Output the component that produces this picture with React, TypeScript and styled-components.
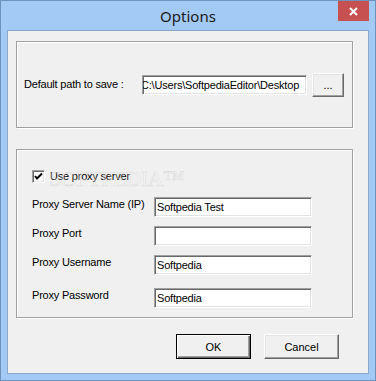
import React from "react";
import styled, { createGlobalStyle } from "styled-components";

const Global = createGlobalStyle`
  html, body { margin: 0; padding: 0; background: #fff; }
  body { font-family: "Liberation Sans", Arial, sans-serif; }
`;

const Window = styled.div`
  box-sizing: border-box;
  width: 376px;
  height: 381px;
  background: #a3caf4;
  border: 1px solid #6f92bb;
  padding: 0 6px 6px 6px;
  display: flex;
  flex-direction: column;
`;

const TitleBar = styled.div`
  height: 29px;
  display: grid;
  grid-template-columns: 1fr auto 1fr;
  align-items: start;
  margin: 0 -6px;
`;

const Title = styled.div`
  grid-column: 2;
  font-family: "Noto Sans", "Open Sans", sans-serif;
  font-size: 15px;
  line-height: 20px;
  padding-top: 5px;
  color: #1a1a1a;
`;

const CloseButton = styled.div`
  grid-column: 3;
  justify-self: end;
  width: 31px;
  height: 20px;
  margin-right: 6px;
  background: #c75050;
  display: flex;
  align-items: center;
  justify-content: center;
`;

const Client = styled.div`
  flex: 1;
  box-sizing: border-box;
  background: #f0f0f0;
  border: 1px solid #8aa8cb;
  padding: 10px 15px 0 8px;
  display: flex;
  flex-direction: column;
  font-size: 11px;
  letter-spacing: -0.2px;
  color: #000;
`;

const GroupBox = styled.div<{ $h: number }>`
  position: relative;
  box-sizing: border-box;
  width: 337px;
  height: ${(p) => p.$h}px;
  border: 1px solid #a0a0a0;
  box-shadow: inset 1px 1px 0 #fff, 1px 1px 0 #fff;
`;

const PathRow = styled.div`
  height: 100%;
  box-sizing: border-box;
  padding: 0 0 0 7px;
  display: grid;
  grid-template-columns: 113px 165px 32px;
  column-gap: 5px;
  align-items: center;
`;

const Label = styled.div`
  font-size: 11px;
  line-height: 13px;
  white-space: nowrap;
`;

const Field = styled.div<{ $w: number }>`
  box-sizing: border-box;
  width: ${(p) => p.$w}px;
  height: 20px;
  background: #fff;
  border: 1px solid;
  border-color: #a0a0a0 #fff #fff #a0a0a0;
  box-shadow: inset 1px 1px 0 #696969, inset -1px -1px 0 #e3e3e3;
  padding: 0 2px;
  display: flex;
  align-items: center;
  overflow: hidden;
  white-space: nowrap;
  font-size: 11px;
`;

const Scrolled = styled.span`
  margin-left: -4px;
`;

const Button = styled.button<{ $default?: boolean }>`
  box-sizing: border-box;
  width: 75px;
  height: 25px;
  padding: 0;
  margin: 0;
  font-family: "Liberation Sans", Arial, sans-serif;
  font-size: 11px;
  color: #000;
  background: #f0f0f0;
  border: 1px solid;
  border-color: ${(p) => (p.$default ? "#000" : "#fff #696969 #696969 #fff")};
  box-shadow: ${(p) =>
    p.$default
      ? "inset 1px 1px 0 #fff, inset -1px -1px 0 #696969, inset -2px -2px 0 #a0a0a0"
      : "inset -1px -1px 0 #a0a0a0, inset 1px 1px 0 #e3e3e3"};
`;

const SmallButton = styled(Button)`
  width: 32px;
  height: 24px;
`;

const ProxyGrid = styled.div`
  box-sizing: border-box;
  padding: 20px 0 0 15px;
  display: grid;
  grid-template-columns: 122px 158px;
  align-items: center;
`;

const CheckRow = styled.div`
  grid-column: 1 / span 2;
  display: flex;
  align-items: center;
  gap: 5px;
  height: 13px;
  margin-bottom: 14px;
`;

const CheckBox = styled.div`
  box-sizing: border-box;
  width: 13px;
  height: 13px;
  background: #fff;
  border: 1px solid;
  border-color: #a0a0a0 #fff #fff #a0a0a0;
  box-shadow: inset 1px 1px 0 #696969, inset -1px -1px 0 #e3e3e3;
  display: flex;
  align-items: center;
  justify-content: center;
`;

const FieldCell = styled.div<{ $gap: number }>`
  margin-bottom: ${(p) => p.$gap}px;
`;

const LabelCell = styled.div<{ $gap: number }>`
  margin-bottom: ${(p) => p.$gap}px;
  padding-bottom: 6px;
  font-size: 11px;
  line-height: 13px;
  white-space: nowrap;
`;

const Watermark = styled.div`
  position: absolute;
  left: 32px;
  top: 16px;
  font-family: "Liberation Serif", serif;
  font-size: 22px;
  letter-spacing: -0.5px;
  color: rgba(255, 255, 255, 0.3);
  -webkit-text-stroke: 0.6px rgba(190, 190, 190, 0.4);
  pointer-events: none;
`;

const Spacer = styled.div<{ $h: number }>`
  height: ${(p) => p.$h}px;
  flex: none;
`;

const ButtonRow = styled.div`
  display: flex;
  justify-content: flex-end;
  gap: 13px;
  padding-right: 14px;
`;

const rows = [
  { label: "Proxy Server Name (IP)", value: "Softpedia Test", gap: 9 },
  { label: "Proxy Port", value: "", gap: 9 },
  { label: "Proxy Username", value: "Softpedia", gap: 13 },
  { label: "Proxy Password", value: "Softpedia", gap: 0 },
];

export default function App() {
  return (
    <>
      <Global />
      <Window>
        <TitleBar>
          <Title>Options</Title>
          <CloseButton>
            <svg width="9" height="9" viewBox="0 0 9 9">
              <path d="M1 1 L8 8 M8 1 L1 8" stroke="#fff" strokeWidth="2" />
            </svg>
          </CloseButton>
        </TitleBar>
        <Client>
          <GroupBox $h={87}>
            <PathRow>
              <Label>Default path to save :</Label>
              <Field $w={165}>
                <Scrolled>C:\Users\SoftpediaEditor\Desktop</Scrolled>
              </Field>
              <SmallButton>...</SmallButton>
            </PathRow>
          </GroupBox>
          <Spacer $h={21} />
          <GroupBox $h={169}>
            <Watermark>SOFTPEDIA™</Watermark>
            <ProxyGrid>
              <CheckRow>
                <CheckBox>
                  <svg width="9" height="9" viewBox="0 0 9 9">
                    <path d="M1 4 L3 6.5 L8 1.5" stroke="#000" strokeWidth="2" fill="none" />
                  </svg>
                </CheckBox>
                <Label>Use proxy server</Label>
              </CheckRow>
              {rows.map((r) => (
                <React.Fragment key={r.label}>
                  <LabelCell $gap={r.gap}>{r.label}</LabelCell>
                  <FieldCell $gap={r.gap}>
                    <Field $w={158}>{r.value}</Field>
                  </FieldCell>
                </React.Fragment>
              ))}
            </ProxyGrid>
          </GroupBox>
          <Spacer $h={16} />
          <ButtonRow>
            <Button $default>OK</Button>
            <Button>Cancel</Button>
          </ButtonRow>
        </Client>
      </Window>
    </>
  );
}
